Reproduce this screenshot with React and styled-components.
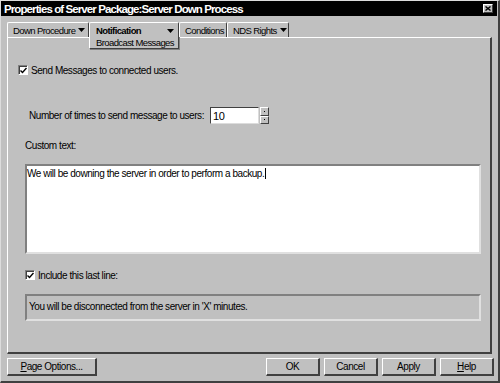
import React from 'react';
import styled, { createGlobalStyle } from 'styled-components';

const Global = createGlobalStyle`
  html, body { margin: 0; padding: 0; background: #c0c0c0; }
  body {
    font-family: "Liberation Sans", Arial, sans-serif;
    font-size: 10px;
    letter-spacing: -0.45px;
    color: #000;
    white-space: nowrap;
  }
`;

const Window = styled.div`
  width: 500px;
  height: 383px;
  box-sizing: border-box;
  background: #c0c0c0;
  border-top: 1px solid #dcdcdc;
  border-left: 1px solid #dcdcdc;
  border-right: 2px solid #404040;
  border-bottom: 2px solid #404040;
  display: flex;
  flex-direction: column;
`;

const TitleBar = styled.div`
  height: 15px;
  margin: 0 1px 0 0;
  background: #000;
  color: #fff;
  display: flex;
  align-items: center;
  justify-content: space-between;
  padding: 0 4px 0 3px;
  font-weight: bold;
  font-size: 11.5px;
  letter-spacing: -0.9px;
`;

const CloseBtn = styled.div`
  width: 10px;
  height: 9px;
  background: #c0c0c0;
  border: 1px solid #fff;
  border-right-color: #404040;
  border-bottom-color: #404040;
  box-sizing: border-box;
  display: flex;
  align-items: center;
  justify-content: center;
`;

const TabRow = styled.div`
  display: flex;
  height: 15px;
  margin-top: 6px;
  padding-left: 6px;
  position: relative;
  z-index: 1;
  font-size: 9.5px;
  letter-spacing: -0.6px;
`;

const Tab = styled.div`
  height: ${p => (p.$active ? '27px' : '15px')};
  box-sizing: border-box;
  padding: ${p => (p.$active ? '2px 4px 0 6px' : '1px 4px 0 5px')};
  border-top: 1px solid #fff;
  border-left: 1px solid #fff;
  border-right: 1px solid #404040;
  border-bottom: ${p => (p.$active ? '1px solid #404040' : 'none')};
  border-radius: 2px 2px 0 0;
  background: #c0c0c0;
  width: ${p => p.$w}px;
  display: flex;
  flex-direction: column;
  box-shadow: ${p => (p.$active ? '1px 1px 0 #808080' : 'none')};
  svg { flex-shrink: 0; }
`;

const TabHead = styled.div`
  display: flex;
  align-items: center;
  justify-content: space-between;
  gap: 3px;
  font-weight: ${p => (p.$bold ? 'bold' : 'normal')};
  height: 12px;
`;

const Sub = styled.div`
  margin-top: 1px;
`;

const Arrow = () => (
  <svg width="7" height="4" viewBox="0 0 7 4">
    <path d="M0 0 H7 L3.5 4 Z" fill="#000" />
  </svg>
);

const Panel = styled.div`
  margin: 0 6px 0 6px;
  height: 317px;
  box-sizing: border-box;
  border-top: 1px solid #fff;
  border-left: 1px solid #fff;
  border-right: 2px solid #404040;
  border-bottom: 2px solid #404040;
  padding: 0 9px 0 17px;
  display: flex;
  flex-direction: column;
`;

const CheckRow = styled.label`
  display: flex;
  align-items: center;
  gap: 3px;
  margin-left: ${p => p.$indent || 0}px;
  margin-top: ${p => p.$top}px;
  height: 10px;
`;

const Box = styled.span`
  width: 10px;
  height: 10px;
  box-sizing: border-box;
  background: #fff;
  border-top: 1px solid #808080;
  border-left: 1px solid #808080;
  border-right: 1px solid #fff;
  border-bottom: 1px solid #fff;
  box-shadow: inset 1px 1px 0 #404040;
  display: flex;
  align-items: center;
  justify-content: center;
`;

const Check = () => (
  <svg width="7" height="7" viewBox="0 0 7 7">
    <path d="M0.5 3.5 L2.5 5.5 L6.5 1" stroke="#000" strokeWidth="1.4" fill="none" />
  </svg>
);

const NumberRow = styled.div`
  display: flex;
  align-items: center;
  margin-top: 32px;
  margin-left: 4px;
  height: 17px;
`;

const NumInput = styled.div`
  margin-left: 6px;
  width: 49px;
  height: 17px;
  box-sizing: border-box;
  background: #fff;
  border-top: 1px solid #404040;
  border-left: 1px solid #404040;
  border-right: 1px solid #dcdcdc;
  border-bottom: 1px solid #dcdcdc;
  padding: 2px 0 0 2px;
  font-size: 11px;
`;

const Spinner = styled.div`
  width: 9px;
  height: 17px;
  display: flex;
  flex-direction: column;
  margin-left: 1px;
`;

const SpinBtn = styled.div`
  flex: 1;
  box-sizing: border-box;
  border-top: 1px solid #fff;
  border-left: 1px solid #fff;
  border-right: 1px solid #404040;
  border-bottom: 1px solid #404040;
  display: flex;
  align-items: center;
  justify-content: center;
  &::after {
    content: '';
    width: 1px;
    height: 1px;
    background: #000;
  }
`;

const Label = styled.div`
  margin-top: ${p => p.$top}px;
  margin-left: ${p => p.$indent || 0}px;
`;

const TextArea = styled.div`
  margin-top: 13px;
  height: 90px;
  box-sizing: border-box;
  background: ${p => (p.$gray ? '#c0c0c0' : '#fff')};
  border-top: 2px solid #808080;
  border-left: 2px solid #808080;
  border-right: 2px solid #e0e0e0;
  border-bottom: 2px solid #e0e0e0;
  padding: 2px 0;
  font-size: 10px;
`;

const Caret = styled.span`
  display: inline-block;
  width: 1px;
  height: 11px;
  background: #000;
  vertical-align: -2px;
  margin-left: 1px;
`;

const LastLine = styled(TextArea)`
  margin-top: 14px;
  height: 27px;
  padding: 5px 2px;
`;

const Footer = styled.div`
  display: flex;
  align-items: center;
  padding: 0 4px 0 6px;
  margin-top: 4px;
  gap: 4px;
`;

const Button = styled.div`
  width: ${p => p.$w}px;
  height: 18px;
  box-sizing: border-box;
  border-top: 1px solid #fff;
  border-left: 1px solid #fff;
  border-right: 2px solid #404040;
  border-bottom: 2px solid #404040;
  display: flex;
  align-items: center;
  justify-content: center;
  margin-left: ${p => (p.$push ? 'auto' : '0')};
  u { text-decoration: underline; }
`;

export default function App() {
  return (
    <Window>
      <Global />
      <TitleBar>
        <span>Properties of Server Package:Server Down Process</span>
        <CloseBtn>
          <svg width="6" height="5" viewBox="0 0 6 5">
            <path d="M0.5 0.5 L5.5 4.5 M5.5 0.5 L0.5 4.5" stroke="#000" strokeWidth="1.4" />
          </svg>
        </CloseBtn>
      </TitleBar>
      <TabRow>
        <Tab $w={82}>
          <TabHead><span>Down Procedure</span><Arrow /></TabHead>
        </Tab>
        <Tab $w={90} $active>
          <TabHead $bold><span>Notification</span><Arrow /></TabHead>
          <Sub>Broadcast Messages</Sub>
        </Tab>
        <Tab $w={48}>
          <TabHead><span>Conditions</span></TabHead>
        </Tab>
        <Tab $w={62}>
          <TabHead><span>NDS Rights</span><Arrow /></TabHead>
        </Tab>
      </TabRow>
      <Panel>
        <CheckRow $top={27} $indent={-7}>
          <Box><Check /></Box>
          <span>Send Messages to connected users.</span>
        </CheckRow>
        <NumberRow>
          <span>Number of times to send message to users:</span>
          <NumInput>10</NumInput>
          <Spinner><SpinBtn /><SpinBtn /></Spinner>
        </NumberRow>
        <Label $top={16}>Custom text:</Label>
        <TextArea>
          We will be downing the server in order to perform a backup.<Caret />
        </TextArea>
        <CheckRow $top={16}>
          <Box><Check /></Box>
          <span>Include this last line:</span>
        </CheckRow>
        <LastLine $gray>You will be disconnected from the server in 'X' minutes.</LastLine>
      </Panel>
      <Footer>
        <Button $w={90}><span><u>P</u>age Options...</span></Button>
        <Button $w={54} $push>OK</Button>
        <Button $w={54}>Cancel</Button>
        <Button $w={54}>Apply</Button>
        <Button $w={54}><span><u>H</u>elp</span></Button>
      </Footer>
    </Window>
  );
}
